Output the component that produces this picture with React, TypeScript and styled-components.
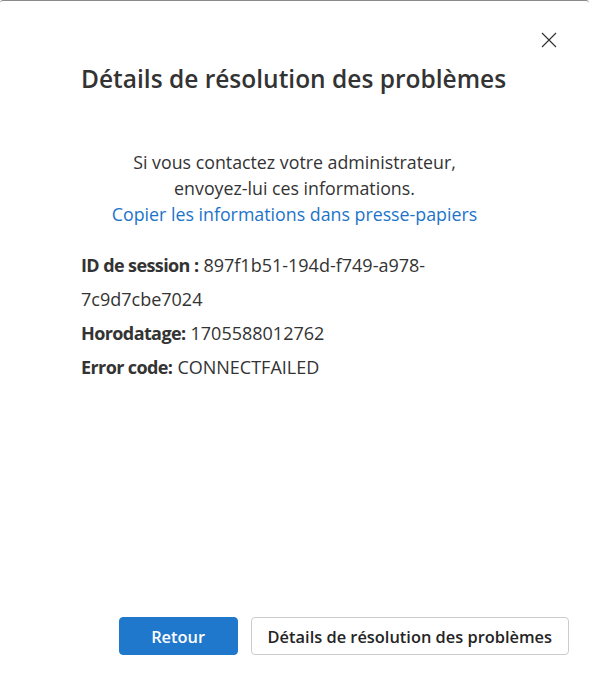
import React from "react";
import styled, { createGlobalStyle } from "styled-components";

const Global = createGlobalStyle`
  html, body { margin: 0; padding: 0; background: #ffffff; }
  body { font-family: "Open Sans", "Noto Sans", Arial, sans-serif; }
  * { box-sizing: border-box; }
`;

const Dialog = styled.div`
  width: 589px;
  height: 684px;
  display: flex;
  flex-direction: column;
  border-top: 1px solid #8a8a8a;
  border-radius: 3px 3px 0 0;
  background: #fff;
  color: #333333;
`;

const TopBar = styled.div`
  display: flex;
  justify-content: flex-end;
  padding: 30px 31px 0 0;
`;

const CloseButton = styled.button`
  width: 18px;
  height: 18px;
  padding: 0;
  border: none;
  background: transparent;
  display: flex;
  align-items: center;
  justify-content: center;
  cursor: pointer;
`;

const Title = styled.h1`
  margin: 14px 0 0 81px;
  font-size: 24.5px;
  font-weight: 600;
  line-height: 32px;
  color: #333333;
`;

const Message = styled.div`
  margin-top: 54px;
  text-align: center;
  font-size: 17.8px;
  line-height: 26px;
  color: #333333;
`;

const Link = styled.a`
  color: #1b74c9;
  text-decoration: none;
  cursor: pointer;
`;

const Details = styled.div`
  margin: 21px 81px 0 81px;
  display: flex;
  flex-direction: column;
`;

const Row = styled.div`
  font-size: 18px;
  line-height: 34px;
  color: #333333;
`;

const Label = styled.span`
  font-weight: 700;
  letter-spacing: -0.6px;
  margin-right: 5px;
`;

const Footer = styled.div`
  margin-top: auto;
  display: flex;
  justify-content: flex-end;
  gap: 13px;
  padding: 0 20px 29px 0;
`;

const Button = styled.button<{ $primary?: boolean }>`
  height: 38px;
  padding: 0 16px;
  border-radius: 4px;
  font-family: inherit;
  font-size: 16.4px;
  font-weight: 600;
  cursor: pointer;
  border: 1px solid ${(p) => (p.$primary ? "#1f78cb" : "#cccccc")};
  background: ${(p) => (p.$primary ? "#1f78cb" : "#ffffff")};
  color: ${(p) => (p.$primary ? "#ffffff" : "#242424")};
  min-width: ${(p) => (p.$primary ? "119px" : "auto")};
`;

export default function App() {
  return (
    <>
      <Global />
      <Dialog>
        <TopBar>
          <CloseButton aria-label="Fermer">
            <svg width="16" height="16" viewBox="0 0 16 16">
              <path d="M1 1 L15 15 M15 1 L1 15" stroke="#333" strokeWidth="1.2" fill="none" />
            </svg>
          </CloseButton>
        </TopBar>
        <Title>Détails de résolution des problèmes</Title>
        <Message>
          Si vous contactez votre administrateur,
          <br />
          envoyez-lui ces informations.
          <br />
          <Link>Copier les informations dans presse-papiers</Link>
        </Message>
        <Details>
          <Row>
            <Label>ID de session :</Label>897f1b51-194d-f749-a978-7c9d7cbe7024
          </Row>
          <Row>
            <Label>Horodatage:</Label>1705588012762
          </Row>
          <Row>
            <Label>Error code:</Label>CONNECTFAILED
          </Row>
        </Details>
        <Footer>
          <Button $primary>Retour</Button>
          <Button>Détails de résolution des problèmes</Button>
        </Footer>
      </Dialog>
    </>
  );
}
